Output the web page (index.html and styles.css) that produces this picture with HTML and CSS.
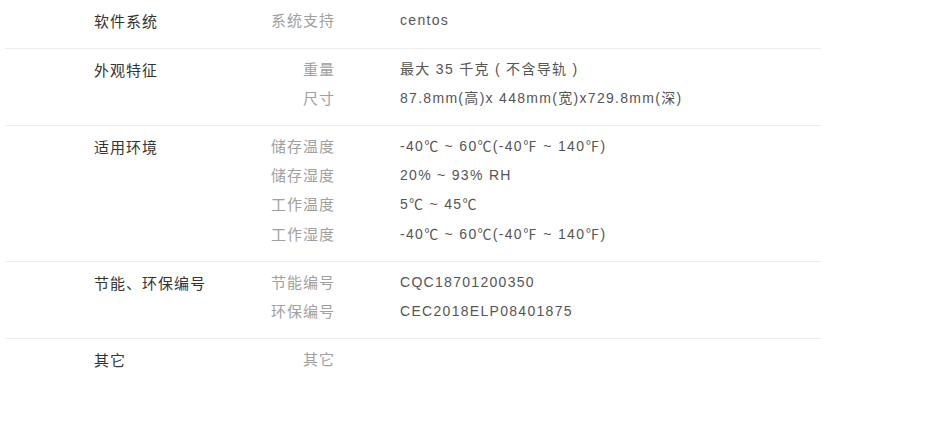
FILE: index.html
```html
<!DOCTYPE html>
<html lang="zh-CN">
<head>
<meta charset="utf-8">
<title>规格参数</title>
<link rel="stylesheet" href="styles.css">
</head>
<body>
<div class="spec">
  <section class="group">
    <div class="cat">软件系统</div>
    <div class="rows">
      <div class="row"><span class="label">系统支持</span><span class="value">centos</span></div>
    </div>
  </section>
  <section class="group">
    <div class="cat">外观特征</div>
    <div class="rows">
      <div class="row"><span class="label">重量</span><span class="value">最大 35 千克 ( 不含导轨 )</span></div>
      <div class="row"><span class="label">尺寸</span><span class="value">87.8mm(高)x 448mm(宽)x729.8mm(深)</span></div>
    </div>
  </section>
  <section class="group">
    <div class="cat">适用环境</div>
    <div class="rows">
      <div class="row"><span class="label">储存温度</span><span class="value">-40℃ ~ 60℃(-40℉ ~ 140℉)</span></div>
      <div class="row"><span class="label">储存湿度</span><span class="value">20% ~ 93% RH</span></div>
      <div class="row"><span class="label">工作温度</span><span class="value">5℃ ~ 45℃</span></div>
      <div class="row"><span class="label">工作湿度</span><span class="value">-40℃ ~ 60℃(-40℉ ~ 140℉)</span></div>
    </div>
  </section>
  <section class="group">
    <div class="cat">节能、环保编号</div>
    <div class="rows">
      <div class="row"><span class="label">节能编号</span><span class="value">CQC18701200350</span></div>
      <div class="row"><span class="label">环保编号</span><span class="value">CEC2018ELP08401875</span></div>
    </div>
  </section>
  <section class="group last">
    <div class="cat">其它</div>
    <div class="rows">
      <div class="row"><span class="label">其它</span><span class="value"></span></div>
    </div>
  </section>
</div>
</body>
</html>
```

FILE: styles.css
```css
html, body {
  margin: 0;
  padding: 0;
  background: #fff;
}
.spec {
  margin-left: 5px;
  width: 816px;
  font-family: "Liberation Sans", Arial, "Noto Sans CJK SC", sans-serif;
  font-size: 14px;
}
.group {
  display: grid;
  grid-template-columns: 165px 1fr;
  padding: 6px 0 11.5px 89px;
  border-bottom: 1px solid #ececec;
}
.group.last {
  border-bottom: none;
}
.cat {
  color: #333;
  font-size: 15px;
  line-height: 29.3px;
  padding-top: 1px;
  letter-spacing: 1px;
}
.rows {
  display: flex;
  flex-direction: column;
}
.row {
  display: flex;
  line-height: 29.3px;
}
.label {
  width: 76px;
  text-align: right;
  color: #a0a0a0;
  font-size: 15px;
  letter-spacing: 1px;
}
.value {
  padding-left: 65px;
  color: #555;
  letter-spacing: 1.3px;
}
```
